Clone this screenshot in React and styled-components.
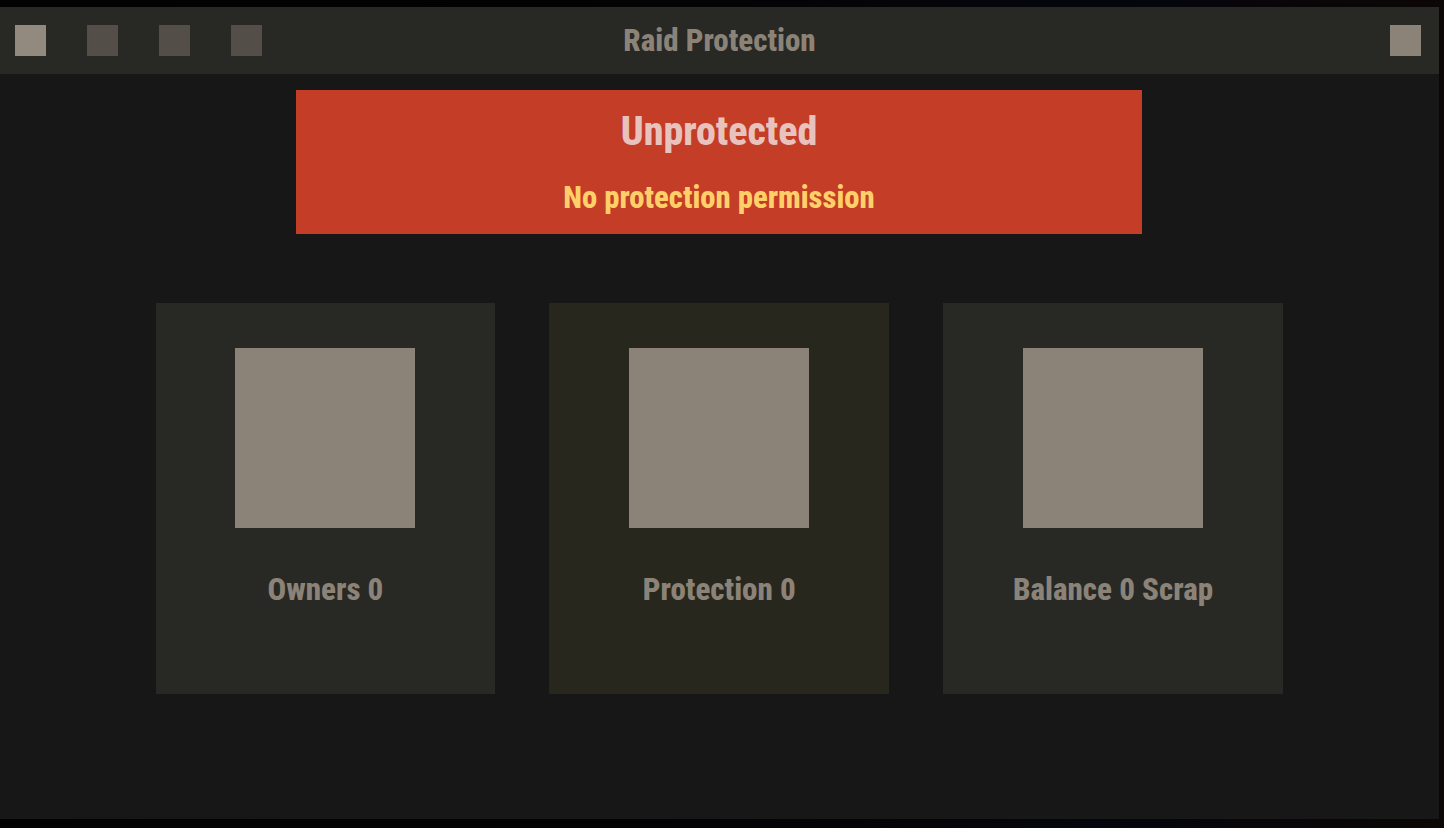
import React from "react";
import styled, { createGlobalStyle } from "styled-components";

const GlobalStyle = createGlobalStyle`
    html, body {
        margin: 0;
        padding: 0;
        height: 100%;
        overflow: hidden;
        background: #030304;
    }
    body {
        font-family: "Roboto", "Liberation Sans", sans-serif;
        font-stretch: 75%;
        font-weight: 800;
    }
`;

const Backdrop = styled.div`
    width: 1444px;
    height: 828px;
    box-sizing: border-box;
    padding: 7px 5px 9px 0;
    background: linear-gradient(90deg, #020203 0%, #030304 40%, #05050d 80%, #0c0705 100%);
`;

const Panel = styled.div`
    height: 100%;
    background: #171717;
    display: flex;
    flex-direction: column;
    align-items: center;
`;

const Header = styled.header`
    width: 100%;
    height: 67px;
    flex: none;
    box-sizing: border-box;
    padding: 0 18px 0 15px;
    background: #282924;
    display: flex;
    align-items: center;
    justify-content: space-between;
    position: relative;
`;

const Tabs = styled.div`
    display: flex;
    gap: 41px;
`;

const Square = styled.div`
    width: 31px;
    height: 31px;
    background: ${props => (props.dim ? "#534e48" : props.lit ? "#928a7f" : "#8c8378")};
`;

const Title = styled.h1`
    margin: 0;
    position: absolute;
    left: 0;
    right: 0;
    text-align: center;
    font-size: 31px;
    line-height: 36px;
    font-weight: 800;
    color: #8c8378;
    pointer-events: none;
`;

const Banner = styled.section`
    width: 846px;
    height: 144px;
    margin-top: 16px;
    margin-left: -1px;
    box-sizing: border-box;
    padding-top: 19px;
    background: #c43d26;
    display: flex;
    flex-direction: column;
    align-items: center;
    gap: 25px;
`;

const Status = styled.div`
    font-size: 40px;
    line-height: 46px;
    color: #e8c2bd;
`;

const Reason = styled.div`
    font-size: 30.7px;
    line-height: 36px;
    color: #ffd06a;
`;

const Cards = styled.div`
    width: 1127.4px;
    margin: 69px 0 0 -0.5px;
    display: grid;
    grid-template-columns: repeat(3, 1fr);
    gap: 54px;
`;

const Card = styled.div`
    height: 391px;
    box-sizing: border-box;
    padding-top: 45px;
    background: ${props => (props.active ? "#28271e" : "#282924")};
    display: flex;
    flex-direction: column;
    align-items: center;
`;

const CardImage = styled.div`
    width: 180px;
    height: 180px;
    background: #8c8378;
`;

const CardLabel = styled.div`
    margin-top: 44px;
    font-size: 31px;
    line-height: 36px;
    color: #8c8378;
`;

const cards = [
    { label: "Owners 0" },
    { label: "Protection 0", active: true },
    { label: "Balance 0 Scrap" }
];

export default function App() {
    return (
        <>
            <GlobalStyle />
            <Backdrop>
                <Panel>
                    <Header>
                        <Tabs>
                            <Square lit />
                            <Square dim />
                            <Square dim />
                            <Square dim />
                        </Tabs>
                        <Title>Raid Protection</Title>
                        <Square />
                    </Header>
                    <Banner>
                        <Status>Unprotected</Status>
                        <Reason>No protection permission</Reason>
                    </Banner>
                    <Cards>
                        {cards.map(card => (
                            <Card key={card.label} active={card.active}>
                                <CardImage />
                                <CardLabel>{card.label}</CardLabel>
                            </Card>
                        ))}
                    </Cards>
                </Panel>
            </Backdrop>
        </>
    );
}
